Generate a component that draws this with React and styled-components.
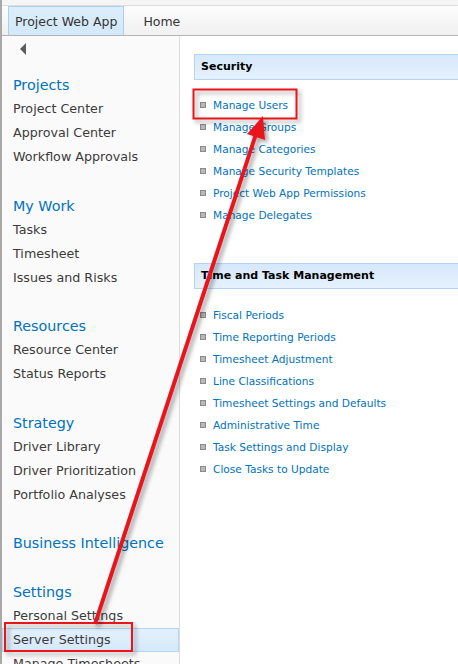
import styled, { createGlobalStyle } from "styled-components";

const GlobalStyle = createGlobalStyle`
  html, body { margin: 0; padding: 0; background: #fff; }
  body { font-family: "DejaVu Sans", Verdana, sans-serif; overflow: hidden; }
`;

const Page = styled.div`
  position: relative;
  width: 458px;
  height: 664px;
  overflow: hidden;
  display: flex;
  flex-direction: column;
  border-left: 2px solid #a9a9a9;
  box-sizing: border-box;
`;

const TopStrip = styled.div`
  height: 5px;
  background: #f5f5f5;
  border-bottom: 1px solid #dedede;
  flex-shrink: 0;
`;

const TabBar = styled.div`
  height: 29px;
  display: flex;
  align-items: stretch;
  padding-left: 6px;
  background: linear-gradient(#fdfdfd, #f0f0f0);
  border-bottom: 1px solid #b4b4b4;
  flex-shrink: 0;
`;

const Tab = styled.div`
  display: flex;
  align-items: center;
  padding: 0 ${(p) => (p.$active ? "6px" : "18px")};
  font-size: 12.5px;
  color: #333;
  border: 1px solid ${(p) => (p.$active ? "#a9d0ef" : "transparent")};
  border-bottom: none;
  background: ${(p) => (p.$active ? "linear-gradient(#ddeefb, #d2e8f8)" : "transparent")};
`;

const Body = styled.div`
  flex: 1;
  display: flex;
  min-height: 0;
`;

const Nav = styled.div`
  width: 177px;
  flex-shrink: 0;
  background: #fafafa;
  border-right: 1px solid #dcdcdc;
  display: flex;
  flex-direction: column;
`;

const BackRow = styled.div`
  height: 37px;
  flex-shrink: 0;
  padding: 7px 0 0 18px;
  box-sizing: border-box;
`;

const BackArrow = styled.div`
  width: 0;
  height: 0;
  border-top: 6px solid transparent;
  border-bottom: 6px solid transparent;
  border-right: 6px solid #5c5c5c;
`;

const Group = styled.div`
  display: flex;
  flex-direction: column;
  flex-shrink: 0;
  margin-top: ${(p) => (p.$first ? "0" : "24.6px")};
`;

const Heading = styled.div`
  height: 24px;
  line-height: 24px;
  padding-left: 11px;
  font-size: 14.3px;
  color: #0072bc;
  white-space: nowrap;
`;

const NavItem = styled.div`
  height: 24px;
  line-height: 24px;
  padding-left: 11px;
  font-size: 12.7px;
  color: #3b3b3b;
  white-space: nowrap;
  box-sizing: border-box;
  ${(p) =>
    p.$selected &&
    `
    background: linear-gradient(#e2f0fc, #d6e9f9);
    border: 1px solid #b3d7f4;
    line-height: 22px;
    padding-left: 10px;
  `}
`;

const Main = styled.div`
  flex: 1;
  background: #fff;
  padding: 18px 0 0 14px;
  display: flex;
  flex-direction: column;
`;

const SectionHeader = styled.div`
  height: 24px;
  line-height: 24px;
  flex-shrink: 0;
  padding-left: 6px;
  font-size: 11px;
  font-weight: bold;
  color: #000;
  background: linear-gradient(#d6e8fb, #e6f1fd);
  border: 1px solid #b3d4f5;
  border-right: none;
  margin-top: ${(p) => p.$mt || "0"};
`;

const LinkList = styled.ul`
  list-style: none;
  flex-shrink: 0;
  margin: ${(p) => p.$mt || "14px"} 0 0;
  padding: 0 0 0 6px;
`;

const LinkItem = styled.li`
  height: 22px;
  display: flex;
  align-items: center;
  gap: 7px;
  font-size: 10.6px;
  color: #0072bc;
  white-space: nowrap;
`;

const Bullet = styled.span`
  width: 4px;
  height: 4px;
  border: 1px solid #8a8a8a;
  background: #b8b8b8;
  flex-shrink: 0;
`;

const Overlay = styled.svg`
  position: absolute;
  left: -2px;
  top: 0;
  pointer-events: none;
`;

const navGroups = [
  { title: "Projects", items: ["Project Center", "Approval Center", "Workflow Approvals"] },
  { title: "My Work", items: ["Tasks", "Timesheet", "Issues and Risks"] },
  { title: "Resources", items: ["Resource Center", "Status Reports"] },
  { title: "Strategy", items: ["Driver Library", "Driver Prioritization", "Portfolio Analyses"] },
  { title: "Business Intelligence", items: [] },
  { title: "Settings", items: ["Personal Settings", "Server Settings", "Manage Timesheets"] },
];

const security = [
  "Manage Users",
  "Manage Groups",
  "Manage Categories",
  "Manage Security Templates",
  "Project Web App Permissions",
  "Manage Delegates",
];

const timeTask = [
  "Fiscal Periods",
  "Time Reporting Periods",
  "Timesheet Adjustment",
  "Line Classifications",
  "Timesheet Settings and Defaults",
  "Administrative Time",
  "Task Settings and Display",
  "Close Tasks to Update",
];

const Annotation = () => (
  <Overlay width="458" height="664" viewBox="0 0 458 664">
    <defs>
      <filter id="shadow" x="-20%" y="-20%" width="140%" height="140%">
        <feDropShadow dx="3" dy="3" stdDeviation="2" floodColor="#000" floodOpacity="0.35" />
      </filter>
    </defs>
    <g filter="url(#shadow)" stroke="#e8141c" fill="none" strokeWidth="2">
      <rect x="193.5" y="89.5" width="103" height="29" />
      <rect x="5" y="623" width="127" height="28" />
    </g>
    <g filter="url(#shadow)">
      <line x1="95" y1="624" x2="256" y2="134" stroke="#e8141c" strokeWidth="4" />
      <polygon points="263,116 265,140 247,134" fill="#e8141c" />
    </g>
  </Overlay>
);

export default function App() {
  return (
    <>
      <GlobalStyle />
      <Page>
        <TopStrip />
        <TabBar>
          <Tab $active>Project Web App</Tab>
          <Tab>Home</Tab>
        </TabBar>
        <Body>
          <Nav>
            <BackRow>
              <BackArrow />
            </BackRow>
            {navGroups.map((g, i) => (
              <Group key={g.title} $first={i === 0}>
                <Heading>{g.title}</Heading>
                {g.items.map((it) => (
                  <NavItem key={it} $selected={it === "Server Settings"}>
                    {it}
                  </NavItem>
                ))}
              </Group>
            ))}
          </Nav>
          <Main>
            <SectionHeader>Security</SectionHeader>
            <LinkList>
              {security.map((s) => (
                <LinkItem key={s}>
                  <Bullet />
                  {s}
                </LinkItem>
              ))}
            </LinkList>
            <SectionHeader $mt="37px">Time and Task Management</SectionHeader>
            <LinkList $mt="15px">
              {timeTask.map((s) => (
                <LinkItem key={s}>
                  <Bullet />
                  {s}
                </LinkItem>
              ))}
            </LinkList>
          </Main>
        </Body>
        <Annotation />
      </Page>
    </>
  );
}
